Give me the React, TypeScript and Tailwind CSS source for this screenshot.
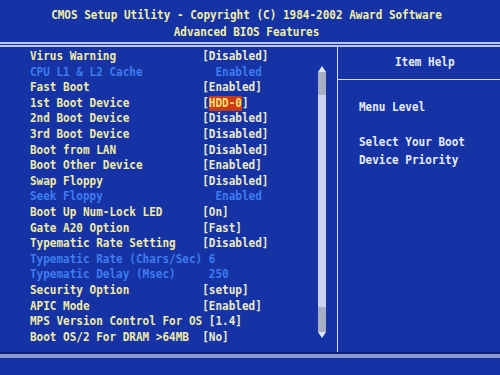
type Row = { label: string; value: string; kind?: "off" | "sel" };

const rows: Row[] = [
  { label: "Virus Warning", value: "[Disabled]" },
  { label: "CPU L1 & L2 Cache", value: "  Enabled", kind: "off" },
  { label: "Fast Boot", value: "[Enabled]" },
  { label: "1st Boot Device", value: "HDD-0", kind: "sel" },
  { label: "2nd Boot Device", value: "[Disabled]" },
  { label: "3rd Boot Device", value: "[Disabled]" },
  { label: "Boot from LAN", value: "[Disabled]" },
  { label: "Boot Other Device", value: "[Enabled]" },
  { label: "Swap Floppy", value: "[Disabled]" },
  { label: "Seek Floppy", value: "  Enabled", kind: "off" },
  { label: "Boot Up Num-Lock LED", value: "[On]" },
  { label: "Gate A20 Option", value: "[Fast]" },
  { label: "Typematic Rate Setting", value: "[Disabled]" },
  { label: "Typematic Rate (Chars/Sec)", value: " 6", kind: "off" },
  { label: "Typematic Delay (Msec)", value: " 250", kind: "off" },
  { label: "Security Option", value: "[setup]" },
  { label: "APIC Mode", value: "[Enabled]" },
  { label: "MPS Version Control For OS", value: " [1.4]" },
  { label: "Boot OS/2 For DRAM >64MB", value: "[No]" },
];

function SetupRow({ label, value, kind }: Row) {
  const off = kind === "off";
  return (
    <div className="h-[15.6px] leading-[15.6px] whitespace-pre scale-y-[1.15]">
      <span className={off ? "text-[#3c7cf0]" : "text-[#f0eca4]"}>
        {label.padEnd(26)}
      </span>
      {kind === "sel" ? (
        <span className="text-[#ececc4]">
          [<span className="bg-[#cc3a16] text-[#f8e070]">{value}</span>]
        </span>
      ) : (
        <span className={off ? "text-[#3c7cf0]" : "text-[#ececc4]"}>{value}</span>
      )}
    </div>
  );
}

function ScrollBar() {
  return (
    <div className="w-[8px] mt-[19px] mb-[14px] flex flex-col">
      <svg width="8" height="6" viewBox="0 0 8 6">
        <path d="M4 0 L8 6 L0 6 Z" fill="#dfe6ff" />
      </svg>
      <div className="h-[23px] bg-[#a8aec4]" />
      <div className="flex-1 bg-[#ccd3f0]" />
      <div className="h-[25px] bg-[#a8aec4]" />
      <svg width="8" height="6" viewBox="0 0 8 6">
        <path d="M0 0 L8 0 L4 6 Z" fill="#dfe6ff" />
      </svg>
    </div>
  );
}

export default function App() {
  return (
    <div className="w-[500px] h-[375px] overflow-hidden bg-[#1533a5] font-['DejaVu_Sans_Mono','Liberation_Mono',monospace] font-bold text-[11px]">
      <div className="h-[42px] pt-[6px] pr-[7px] text-center text-[#f0f0a4] leading-[17px] whitespace-pre">
        <div className="scale-y-[1.15]">CMOS Setup Utility - Copyright (C) 1984-2002 Award Software</div>
        <div className="scale-y-[1.15]">Advanced BIOS Features</div>
      </div>
      <div className="h-[5px] border-y-2 border-[#bcc6ee]" />

      <div className="flex h-[305px]">
        <div className="w-[338px] border-r border-[#d4dcf8] flex">
          <div className="flex-1 pl-[30px] pt-[2px]">
            {rows.map((r) => (
              <SetupRow key={r.label} {...r} />
            ))}
          </div>
          <ScrollBar />
          <div className="w-[11px]" />
        </div>
        <div className="flex-1 text-[#e6ecf8]">
          <div className="h-[33px] border-b border-[#d4dcf8] pl-[57px] leading-[32px]">
            <div className="scale-y-[1.15]">Item Help</div>
          </div>
          <div className="pl-[21px] pt-[19px] leading-[17.6px]">
            <div className="scale-y-[1.15]">Menu Level</div>
            <div>&nbsp;</div>
            <div className="scale-y-[1.15]">Select Your Boot</div>
            <div className="scale-y-[1.15]">Device Priority</div>
          </div>
        </div>
      </div>

      <div className="h-[2px] bg-[#0d1f78]" />
      <div className="h-[4px] bg-[#8898d0]" />
    </div>
  );
}
